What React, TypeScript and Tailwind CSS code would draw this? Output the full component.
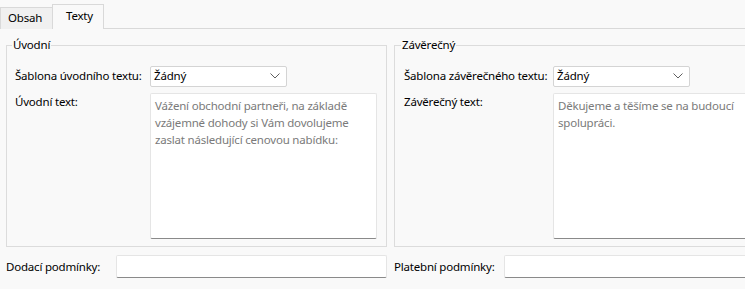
export default function App() {
  return (
    <div className="w-[745px] h-[289px] overflow-hidden bg-[#f9f9f9] text-[11.5px] leading-[16px] tracking-[-0.2px] text-black whitespace-nowrap font-['Noto_Sans',sans-serif]">
      {/* tab strip */}
      <div className="h-[29px] flex items-end border-b border-[#d9d9d9] bg-[#f9f9f9]">
        <div className="h-[22px] w-[52px] bg-[#f0f0f0] border-t border-l border-[#d9d9d9] flex items-center pl-[7px] mb-[-1px] pb-[1px]">
          Obsah
        </div>
        <div className="h-[25px] w-[52px] bg-[#f9f9f9] border-t border-x border-[#d9d9d9] flex items-center pl-[13px] mb-[-1px] pb-[2px]">
          Texty
        </div>
      </div>

      <div className="pl-[6px] pt-[8px]">
        <div className="grid grid-cols-[381px_381px] gap-[7px] w-[769px]">
          <fieldset className="border border-[#dcdcdc] pl-[8px] pr-[9px] pt-[13px] pb-[8px] h-[210px]">
            <legend className="ml-[-3px] px-[1px]">Úvodní</legend>
            <div className="flex items-center h-[20px]">
              <span className="w-[135px]">Šablona úvodního textu:</span>
              <Combo />
            </div>
            <div className="flex mt-[7px]">
              <span className="w-[135px] pt-[1px]">Úvodní text:</span>
              <Area text="Vážení obchodní partneři, na základě vzájemné dohody si Vám dovolujeme zaslat následující cenovou nabídku:" />
            </div>
          </fieldset>

          <fieldset className="border border-[#dcdcdc] pl-[9px] pr-[9px] pt-[13px] pb-[8px] h-[210px]">
            <legend className="ml-[-3px] px-[1px]">Závěrečný</legend>
            <div className="flex items-center h-[20px]">
              <span className="w-[149px]">Šablona závěrečného textu:</span>
              <Combo />
            </div>
            <div className="flex mt-[7px]">
              <span className="w-[149px] pt-[1px]">Závěrečný text:</span>
              <Area text="Děkujeme a těšíme se na budoucí spolupráci." />
            </div>
          </fieldset>
        </div>

        <div className="grid grid-cols-[381px_381px] gap-[7px] w-[769px] mt-[8px]">
          <div className="flex items-center">
            <span className="w-[110px]">Dodací podmínky:</span>
            <Field />
          </div>
          <div className="flex items-center">
            <span className="w-[110px]">Platební podmínky:</span>
            <Field />
          </div>
        </div>
      </div>
      <div className="mt-[11px] border-t border-[#e5e5e5]" />
    </div>
  )
}

function Combo() {
  return (
    <div className="w-[137px] h-[21px] bg-white border border-[#d4d4d4] rounded-[2px] flex items-center justify-between pl-[3px] pr-[6px]">
      <span>Žádný</span>
      <svg width="10" height="6" viewBox="0 0 10 6" fill="none">
        <polyline points="0.5,0.5 5,5 9.5,0.5" stroke="#5f5f5f" strokeWidth="1" />
      </svg>
    </div>
  )
}

function Area({ text }: { text: string }) {
  return (
    <div className="w-[227px] h-[146px] bg-white border border-[#e5e5e5] border-b-[#8a8a8a] rounded-[2px] px-[4px] pt-[3px] text-[#7a7a7a] leading-[17px] whitespace-normal shrink-0">
      {text}
    </div>
  )
}

function Field() {
  return (
    <div className="w-[271px] h-[23px] bg-white border border-[#e5e5e5] border-b-[#8a8a8a] rounded-[2px] shrink-0" />
  )
}
